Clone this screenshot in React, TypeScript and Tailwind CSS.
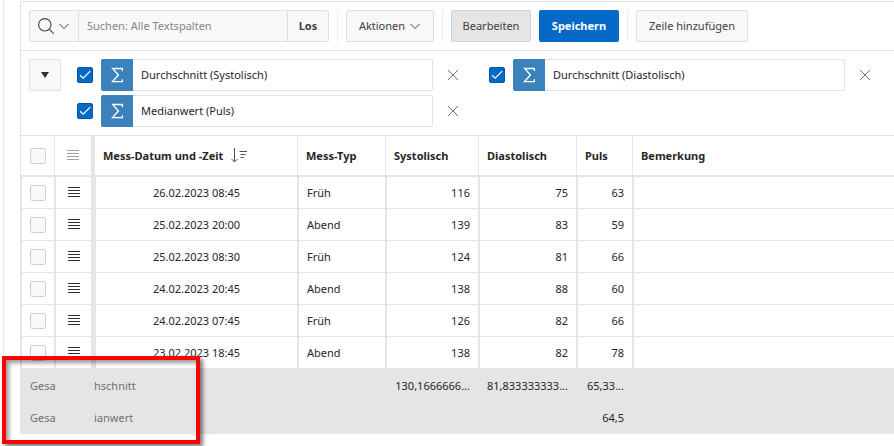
import React from "react";

const rows = [
  ["26.02.2023 08:45", "Früh", "116", "75", "63"],
  ["25.02.2023 20:00", "Abend", "139", "83", "59"],
  ["25.02.2023 08:30", "Früh", "124", "81", "66"],
  ["24.02.2023 20:45", "Abend", "138", "88", "60"],
  ["24.02.2023 07:45", "Früh", "126", "82", "66"],
  ["23.02.2023 18:45", "Abend", "138", "82", "78"],
];

function Chevron() {
  return (
    <svg className="h-3 w-3 shrink-0" viewBox="0 0 12 12" fill="none" stroke="#404040">
      <path d="M1.5 4 6 8.5 10.5 4" />
    </svg>
  );
}

function Lines() {
  return (
    <svg className="h-3 w-3" viewBox="0 0 12 12" fill="none" stroke="currentColor" strokeWidth="1.2" aria-hidden="true">
      <path d="M0 .5h12M0 3.5h12M0 6.5h12M0 9.5h12" />
    </svg>
  );
}

function Separator() {
  return <span className="mx-2 h-8 w-px shrink-0 bg-[#ededed]" />;
}

function Aggregate({ label }: { label: string }) {
  return (
    <div className="flex h-8 w-96 shrink-0 items-center">
      <label className="relative flex h-4 w-4 shrink-0">
        <input
          type="checkbox"
          defaultChecked
          aria-label={label}
          className="h-4 w-4 appearance-none rounded-xs border border-[#0556a5] bg-[#0569c8]"
        />
        <svg className="pointer-events-none absolute inset-0 h-4 w-4" viewBox="0 0 16 16" fill="none" stroke="white" strokeWidth="1.2">
          <path d="M3 8.2 6.2 11.2 13.2 4.2" />
        </svg>
      </label>
      <div className="ml-2 flex h-8 flex-1 rounded-xs border border-l-0 border-[#e2e2e2]">
        <span className="-my-px flex w-8 items-center justify-center rounded-l-xs bg-[#3b82bd]">
          <svg className="h-4 w-4" viewBox="0 0 16 16" fill="none" stroke="white" strokeWidth="1.3">
            <path d="M13.4 4V1.5H3.6L9.4 8 3.4 14.7H13.4V12.2" />
          </svg>
        </span>
        <button type="button" className="flex-1 px-2 text-left">
          {label}
        </button>
      </div>
      <button type="button" aria-label={`${label} entfernen`} className="ml-3 flex h-4 w-4 items-center justify-center">
        <svg className="h-3 w-3" viewBox="0 0 12 12" fill="none" stroke="#737373">
          <path d="M1 1 11 11M11 1 1 11" />
        </svg>
      </button>
    </div>
  );
}

const box = "block h-4 w-4 appearance-none rounded-xs border border-[#d0d0d0] bg-[#f8f8f8]";
const button = "h-8 shrink-0 rounded-xs border border-[#e0e0e0] bg-[#f8f8f8]";
const head = "border-b-2 border-l border-[#e5e5e5] px-2 text-left font-bold whitespace-nowrap";
const cell = "border-b border-l-2 border-[#e5e5e5] whitespace-nowrap";

export default function App() {
  return (
    <div className="relative overflow-hidden bg-white pl-[3px] font-['Noto_Sans','Open_Sans',sans-serif] text-[11px] leading-4 text-[#262626]">
      <div className="border-l border-[#e8e8e8] pt-px pb-3 pl-4">
        <main className="border-t border-l border-[#e2e2e2]">
          <div className="flex items-center border-b border-[#e2e2e2] p-2 text-[#404040]">
            <div className={`${button} flex w-[300px]`}>
              <button type="button" aria-label="Spalte auswählen" className="flex w-12 items-center justify-center gap-1">
                <svg className="h-4 w-4" viewBox="0 0 16 16" fill="none" stroke="#404040" strokeWidth="1.1">
                  <circle cx="6.8" cy="6.8" r="6.2" />
                  <path d="m11.2 11.2 4.5 4.5" />
                </svg>
                <Chevron />
              </button>
              <input
                type="text"
                aria-label="Suchen"
                placeholder="Suchen: Alle Textspalten"
                className="min-w-0 flex-1 border-x border-[#e0e0e0] px-2 placeholder:text-[#858585]"
              />
              <button type="button" className="w-10 font-bold">
                Los
              </button>
            </div>
            <Separator />
            <button type="button" className={`${button} flex w-[88px] items-center justify-center gap-1`}>
              Aktionen
              <Chevron />
            </button>
            <Separator />
            <button type="button" className="h-8 w-20 shrink-0 rounded-xs border border-[#d2d2d2] bg-[#e5e5e5]">
              Bearbeiten
            </button>
            <button type="button" className="ml-2 h-8 w-20 shrink-0 rounded-xs bg-[#0569c8] font-bold text-white">
              Speichern
            </button>
            <Separator />
            <button type="button" className={`${button} w-28`}>
              Zeile hinzufügen
            </button>
          </div>

          <div className="flex gap-4 border-b border-[#e2e2e2] p-2">
            <button type="button" aria-label="Einstellungen" className={`${button} flex w-8 items-center justify-center`}>
              <svg className="h-2 w-2" viewBox="0 0 8 8" fill="#303030">
                <path d="M0 1h8L4 7z" />
              </svg>
            </button>
            <div className="flex flex-1 flex-wrap gap-x-7 gap-y-1">
              <Aggregate label="Durchschnitt (Systolisch)" />
              <Aggregate label="Durchschnitt (Diastolisch)" />
              <Aggregate label="Medianwert (Puls)" />
            </div>
          </div>

          <table className="-ml-px w-[calc(100%+1px)] table-fixed border-separate border-spacing-0">
            <colgroup>
              <col className="w-[34px]" />
              <col className="w-[37px]" />
              <col className="w-[206px]" />
              <col className="w-[88px]" />
              <col className="w-[93px]" />
              <col className="w-[98px]" />
              <col className="w-[56px]" />
              <col />
            </colgroup>
            <thead>
              <tr className="h-[41px]">
                <th className="border-b-2 border-l border-[#e5e5e5] pl-[9px]">
                  <input type="checkbox" aria-label="Alle auswählen" className={box} />
                </th>
                <th className="border-b-2 border-l border-[#e5e5e5] pl-3 text-[#a0a0a0]">
                  <Lines />
                </th>
                <th className="border-b-2 border-l-4 border-[#e5e5e5] px-2 text-left font-bold whitespace-nowrap">
                  <span className="flex items-center gap-2">
                    Mess-Datum und -Zeit
                    <svg className="h-4 w-4" viewBox="0 0 16 16" fill="none" stroke="#505050">
                      <path d="M3.5 0v14M.5 11l3 3 3-3M8.5 3.5H16M9.5 6.5H14.5M9.5 9.5H12.5" />
                    </svg>
                  </span>
                </th>
                <th className={head}>Mess-Typ</th>
                <th className={head}>Systolisch</th>
                <th className={head}>Diastolisch</th>
                <th className={head}>Puls</th>
                <th className={head}>Bemerkung</th>
              </tr>
            </thead>
            <tbody>
              {rows.map((r) => (
                <tr key={r[0]} className="h-8">
                  <td className={`${cell} pl-2`}>
                    <input type="checkbox" aria-label={`Zeile ${r[0]}`} className={box} />
                  </td>
                  <td className={`${cell} pl-3`}>
                    <button type="button" aria-label="Zeilenaktionen" className="block text-[#303030]">
                      <Lines />
                    </button>
                  </td>
                  <td className="border-b border-l-[5px] border-[#e5e5e5] text-center whitespace-nowrap">{r[0]}</td>
                  <td className={`${cell} pl-2`}>{r[1]}</td>
                  <td className={`${cell} pr-2 text-right`}>{r[2]}</td>
                  <td className={`${cell} pr-2 text-right`}>{r[3]}</td>
                  <td className={`${cell} pr-2 text-right`}>{r[4]}</td>
                  <td className={cell} />
                </tr>
              ))}
            </tbody>
            <tfoot className="bg-[#e5e5e5]">
              <tr className="h-[33px]">
                <td className="pl-[10px] text-[#707070]">Gesa</td>
                <td />
                <td className="pl-[3px] text-[#707070]">hschnitt</td>
                <td />
                <td className="pr-2 text-right whitespace-nowrap">130,1666666...</td>
                <td className="pr-2 text-right whitespace-nowrap">81,833333333...</td>
                <td className="pr-2 text-right whitespace-nowrap">65,33...</td>
                <td />
              </tr>
              <tr className="h-8">
                <td className="pl-[10px] text-[#707070]">Gesa</td>
                <td />
                <td className="pl-[3px] text-[#707070]">ianwert</td>
                <td />
                <td />
                <td />
                <td className="pr-2 text-right">64,5</td>
                <td />
              </tr>
            </tfoot>
          </table>
        </main>
      </div>
      <div className="pointer-events-none absolute bottom-0.5 left-0.5 h-[88px] w-[198px] border-4 border-[#ff0000] shadow-[3px_3px_4px_rgba(0,0,0,0.5),inset_3px_3px_4px_rgba(0,0,0,0.4)]" />
    </div>
  );
}
